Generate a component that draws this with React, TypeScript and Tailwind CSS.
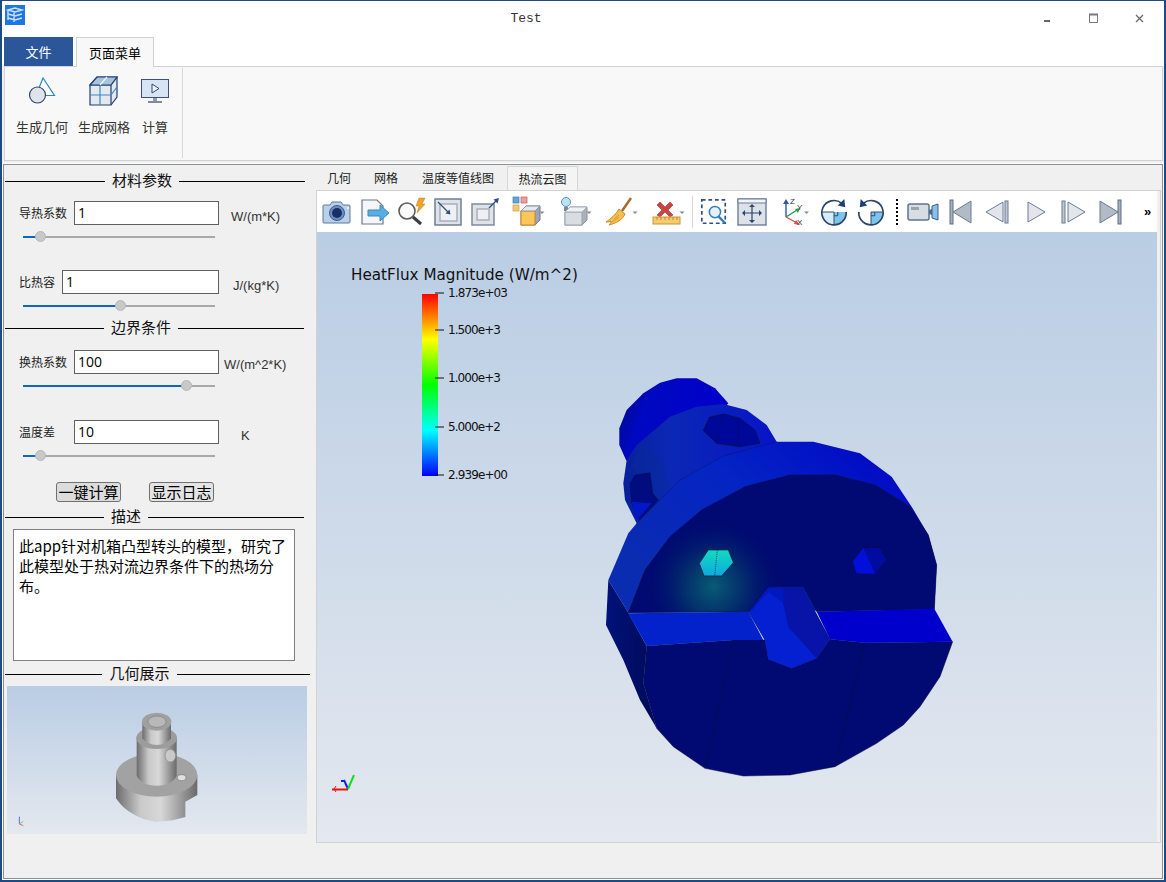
import type { ReactNode } from 'react';

const cjk = "font-['Noto_Sans_CJK_SC','Noto_Sans',sans-serif]";

function Ico({ children, className = 'w-[32px] h-[32px]' }: { children: ReactNode; className?: string }) {
    return (
        <svg viewBox="0 0 32 32" className={className} fill="none">
            {children}
        </svg>
    );
}

const Caret = () => <path d="M27.500 15.500h5l-2.500 2.500z" fill="#8a8a8a" />;

const toolbar = [
    {
        w: 'w-[37px]',
        icon: (
            <Ico>
                <path d="M3 9h6l2-3h9l2 3h6a1 1 0 0 1 1 1v16a1 1 0 0 1-1 1H3a1 1 0 0 1-1-1V10a1 1 0 0 1 1-1z" fill="#b9d0ea" stroke="#5f7899" />
                <circle cx="16" cy="17" r="7.500" fill="#6d8fc0" stroke="#3d5b8c" />
                <circle cx="16" cy="17" r="5" fill="#172f63" />
                <circle cx="27" cy="12" r="1" fill="#fff" />
            </Ico>
        ),
    },
    {
        w: 'w-[37px]',
        icon: (
            <Ico>
                <path d="M4 4h15l6 6v18H4z" fill="#f4f6f9" stroke="#6c7888" strokeWidth="1.200" />
                <path d="M10 14h12v-5l9 8-9 8v-5H10z" fill="#58aee2" stroke="#3d86bd" />
            </Ico>
        ),
    },
    {
        w: 'w-[37px]',
        icon: (
            <Ico>
                <circle cx="12" cy="15" r="8" fill="#fafafa" stroke="#5c5c5c" strokeWidth="1.600" />
                <path d="M18 21l8 7" stroke="#3d3d3d" strokeWidth="3" />
                <path d="M24 2h6l-3 6h3l-8 9 2-7h-3z" fill="#f0a22a" stroke="#c9791a" strokeWidth=".5" />
            </Ico>
        ),
    },
    {
        w: 'w-[37px]',
        icon: (
            <Ico>
                <rect x="3" y="3" width="26" height="26" fill="#dfe3e8" stroke="#6e7f99" strokeWidth="1.500" />
                <rect x="8" y="8" width="17" height="17" fill="#eef0f3" stroke="#a8b0bc" strokeWidth="1.500" />
                <path d="M6 6l11 11" stroke="#2c4f80" strokeWidth="1.200" />
                <path d="M18.500 18.500l-5-1 4-4z" fill="#2c4f80" />
            </Ico>
        ),
    },
    {
        w: 'w-[37px]',
        icon: (
            <Ico>
                <rect x="3" y="8" width="22" height="21" fill="#dfe3e8" stroke="#7d8a9e" strokeWidth="1.500" />
                <rect x="8" y="13" width="12" height="11" fill="#eef0f3" stroke="#a8b0bc" strokeWidth="1.500" />
                <path d="M20 12L28 4" stroke="#2c4f80" strokeWidth="1.200" />
                <path d="M30 2l-1.500 5.500-4-4z" fill="#2c4f80" />
            </Ico>
        ),
    },
    {
        w: 'w-[49px]',
        icon: (
            <Ico className="w-[36px] h-[32px] overflow-visible">
                <rect x="1" y="1" width="6" height="6" fill="#63a6d8" stroke="#3f7fb0" strokeWidth=".7" />
                <rect x="9" y="1" width="6" height="6" fill="#e9a0a0" stroke="#c25a5a" strokeWidth=".7" />
                <rect x="1" y="9" width="6" height="6" fill="#f5c878" stroke="#d59a38" strokeWidth=".7" />
                <path d="M9 15l5-5h14v14l-5 5H9z" fill="#9aa6b5" stroke="#6d7a8b" />
                <rect x="9" y="15" width="14" height="14" fill="#fcc65a" stroke="#c98a28" />
                <path d="M9 15l5-5h14l-5 5z" fill="#e5e8ec" stroke="#8e99a8" />
                <Caret />
            </Ico>
        ),
    },
    {
        w: 'w-[45px]',
        icon: (
            <Ico className="w-[36px] h-[32px] overflow-visible">
                <circle cx="7" cy="6" r="4.500" fill="#bfe2f7" stroke="#4f93c6" />
                <rect x="5" y="11" width="4" height="4" fill="#7c8792" />
                <path d="M6 16l5-5h17v13l-5 5H6z" fill="#aab1bb" stroke="#8a94a1" />
                <rect x="6" y="16" width="17" height="13" fill="#d9dde2" stroke="#9aa3ae" />
                <path d="M6 16l5-5h17l-5 5z" fill="#eff1f3" stroke="#a8b0ba" />
                <Caret />
            </Ico>
        ),
    },
    {
        w: 'w-[48px]',
        icon: (
            <Ico className="w-[36px] h-[32px] overflow-visible">
                <path d="M26 2l-9 13" stroke="#a9662a" strokeWidth="2.400" />
                <path d="M14 13l6 5c-2 5-8 9-16 11 2-2 2-3 2-4-1 1-3 1-5 1 5-3 10-8 13-13z" fill="#f6bd4f" stroke="#c98c2c" />
                <path d="M9 23l5-4M7 26l7-5" stroke="#c98c2c" strokeWidth=".7" />
                <Caret />
            </Ico>
        ),
    },
    {
        w: 'w-[45px]',
        icon: (
            <Ico className="w-[36px] h-[32px] overflow-visible">
                <path d="M8 6l5 5 5-5 3 3-5 5 5 5-3 2-5-5-5 5-3-2 5-5-5-5z" fill="#c9453f" stroke="#a5302b" strokeWidth=".6" />
                <rect x="1" y="21" width="27" height="7" fill="#f6ca6d" stroke="#c99638" />
                <path d="M5 21v3M9 21v3M13 21v3M17 21v3M21 21v3M25 21v3" stroke="#a97e2c" strokeWidth=".8" />
                <Caret />
            </Ico>
        ),
    },
    {
        w: 'w-[5px]',
        icon: <div className="w-px h-[32px] bg-[#d8d8d8]" />,
    },
    {
        w: 'w-[38px]',
        icon: (
            <Ico className="w-[30px] h-[30px]">
                <rect x="3" y="3" width="25" height="25" stroke="#33507c" strokeWidth="1.800" strokeDasharray="4 3" />
                <circle cx="17" cy="16" r="6" fill="#e6f2fb" stroke="#2f7fb8" strokeWidth="1.600" />
                <path d="M21 21l7 7" stroke="#2f7fb8" strokeWidth="2.600" />
            </Ico>
        ),
    },
    {
        w: 'w-[38px]',
        icon: (
            <Ico>
                <rect x="2" y="3" width="28" height="26" fill="#dde2e8" stroke="#6d7f9b" strokeWidth="1.400" />
                <rect x="2" y="3" width="28" height="4" fill="#f2f4f7" stroke="#6d7f9b" />
                <path d="M16 9v17M8 17h16" stroke="#26476f" strokeWidth="1.200" />
                <path d="M16 8l3 3h-6zM16 27l3-3h-6zM6 17l3-3v6zM26 17l-3-3v6z" fill="#26476f" />
            </Ico>
        ),
    },
    {
        w: 'w-[45px]',
        icon: (
            <Ico className="w-[36px] h-[32px] overflow-visible">
                <path d="M8 21V6" stroke="#2c56a5" strokeWidth="1.400" />
                <path d="M8 3l3 5H5z" fill="#2c56a5" />
                <path d="M8 21l11-7" stroke="#2a9a4a" strokeWidth="1.400" />
                <path d="M22 12l-2 5-3-4z" fill="#2a9a4a" />
                <path d="M8 21l11 6" stroke="#e04848" strokeWidth="1.400" />
                <path d="M22 29l-6-1 2-4z" fill="#e04848" />
                <text x="12" y="8" fontSize="8" fill="#333" fontFamily="Liberation Sans">Z</text>
                <text x="19" y="14" fontSize="8" fill="#333" fontFamily="Liberation Sans">Y</text>
                <text x="19" y="29" fontSize="8" fill="#333" fontFamily="Liberation Sans">X</text>
                <path d="M26 15.500h5l-2.500 2.500z" fill="#8a8a8a" />
            </Ico>
        ),
    },
    {
        w: 'w-[36px]',
        icon: (
            <Ico className="w-[30px] h-[30px]">
                <path d="M3 16a13 13 0 0 0 13 13V16z" fill="#d4ecfb" />
                <path d="M16 16v13a13 13 0 0 0 13-13z" fill="#7cc4ee" />
                <path d="M24 6.500A13 13 0 1 0 29 16" stroke="#2c4468" strokeWidth="1.800" />
                <path d="M3 16h13v13M16 20h4v-4" stroke="#2c4468" strokeWidth="1" />
                <path d="M27 2l1 9-8-2z" fill="#1c3f77" />
            </Ico>
        ),
    },
    {
        w: 'w-[37px]',
        icon: (
            <Ico className="w-[30px] h-[30px]">
                <path d="M29 16a13 13 0 0 1-13 13V16z" fill="#d4ecfb" />
                <path d="M16 16h13a13 13 0 0 1-13 13z" fill="#7cc4ee" />
                <path d="M8 6.500A13 13 0 1 1 3 16" stroke="#2c4468" strokeWidth="1.800" />
                <path d="M29 16H16v13M16 20h4v-4" stroke="#2c4468" strokeWidth="1" />
                <path d="M5 2l-1 9 8-2z" fill="#1c3f77" />
            </Ico>
        ),
    },
    {
        w: 'w-[15px]',
        icon: <div className="w-[2px] h-[26px] border-l-2 border-dotted border-black" />,
    },
    {
        w: 'w-[38px]',
        icon: (
            <Ico>
                <rect x="1" y="8" width="21" height="16" rx="2" fill="#d8dde3" stroke="#5f7391" strokeWidth="1.500" />
                <rect x="4" y="11" width="8" height="3" fill="#9aa3ae" />
                <path d="M22 14l3-1v6l-3-1z" fill="#4a6c9a" />
                <path d="M25 10l6-2v16l-6-2z" fill="#87c0e4" stroke="#3f5f8c" />
            </Ico>
        ),
    },
    {
        w: 'w-[38px]',
        icon: (
            <Ico>
                <rect x="5" y="4" width="3" height="24" fill="#a7b0bc" stroke="#5c6f8c" />
                <path d="M8 16L26 5v22z" fill="#b2bac5" stroke="#6a7b95" />
            </Ico>
        ),
    },
    {
        w: 'w-[36px]',
        icon: (
            <Ico>
                <path d="M4 16l17-10v20z" fill="#e2e6eb" stroke="#6a7b95" />
                <rect x="23" y="5" width="3" height="22" fill="#c1c8d1" stroke="#6a7b95" />
            </Ico>
        ),
    },
    {
        w: 'w-[39px]',
        icon: (
            <Ico>
                <path d="M8 6l17 10-17 10z" fill="#e2e6eb" stroke="#6a7b95" />
            </Ico>
        ),
    },
    {
        w: 'w-[36px]',
        icon: (
            <Ico>
                <rect x="5" y="5" width="3" height="22" fill="#c1c8d1" stroke="#6a7b95" />
                <path d="M11 6l17 10-17 10z" fill="#e2e6eb" stroke="#6a7b95" />
            </Ico>
        ),
    },
    {
        w: 'w-[37px]',
        icon: (
            <Ico>
                <path d="M6 5l18 11L6 27z" fill="#b2bac5" stroke="#6a7b95" />
                <rect x="24" y="4" width="3" height="24" fill="#a7b0bc" stroke="#5c6f8c" />
            </Ico>
        ),
    },
];

function SectionHeader({ left, mid, right, title, className }: { left: string; mid: string; right: string; title: string; className: string }) {
    return (
        <div className={`flex items-center h-[18px] ml-px ${className}`}>
            <div className={`h-px bg-black ${left}`} />
            <div className={`text-center text-[15px] leading-none text-[#111] mb-[3px] ${mid}`}>{title}</div>
            <div className={`h-px bg-black ${right}`} />
        </div>
    );
}

function ParamRow({ label, value, unit, labelW, inputW, unitCls, className }: { label: string; value: string; unit: string; labelW: string; inputW: string; unitCls: string; className: string }) {
    return (
        <div className={`flex items-center h-[24px] pl-[15px] ${className}`}>
            <div className={`text-[12px] leading-none text-[#222] whitespace-nowrap ${labelW}`}>{label}</div>
            <div className={`h-[24px] bg-white border border-[#606060] pl-[3px] text-[14px] leading-[22px] text-black font-['Open_Sans',sans-serif] ${inputW}`}>{value}</div>
            <div className={`text-[13px] leading-none text-[#333] whitespace-nowrap font-['Liberation_Sans',sans-serif] ${unitCls}`}>{unit}</div>
        </div>
    );
}

function Slider({ pos }: { pos: number }) {
    return (
        <div className="relative mt-[4px] ml-[19px] w-[192px] h-[16px] flex items-center">
            <div className="w-full h-[2px] bg-[#a9a9a9]">
                <div className="h-full bg-[#1068bc]" style={{ width: pos }} />
            </div>
            <div className="absolute top-[2px] w-[11px] h-[11px] rounded-full bg-[#c8c8c8] border border-[#b8b8b8]" style={{ left: pos - 5.5 }} />
        </div>
    );
}

function GeometryPreview() {
    return (
        <svg viewBox="21 558 900 444" className="w-[300px] h-[148px] block">
            <defs>
                <linearGradient id="geoBg" x1="0" y1="0" x2="0" y2="1">
                    <stop offset="0" stopColor="#b9cde4" />
                    <stop offset="1" stopColor="#e4e8ef" />
                </linearGradient>
                <linearGradient id="metal" x1="0" y1="0" x2="1" y2="0">
                    <stop offset="0" stopColor="#6c6c6c" />
                    <stop offset=".3" stopColor="#c9c9c9" />
                    <stop offset=".55" stopColor="#d8d8d8" />
                    <stop offset="1" stopColor="#6a6a6a" />
                </linearGradient>
            </defs>
            <rect x="21" y="558" width="900" height="444" fill="url(#geoBg)" />
            <path d="M348 825v70c20 30 50 50 85 63l35 8 50-5 38-10v-46l36-20v-60z" fill="url(#metal)" />
            <ellipse cx="470" cy="825" rx="122" ry="65" fill="#a2a2a2" />
            <path d="M410 712v115c8 18 30 30 60 30s52-12 60-30V712z" fill="url(#metal)" />
            <ellipse cx="470" cy="714" rx="61" ry="33" fill="#9c9c9c" />
            <path d="M427 665v50c8 12 26 20 43 20s35-8 43-20v-50z" fill="url(#metal)" />
            <ellipse cx="470" cy="665" rx="44" ry="27" fill="#a0a0a0" />
            <ellipse cx="471" cy="665" rx="27" ry="17" fill="#b8b8b8" stroke="#7e7e7e" strokeWidth="2" />
            <ellipse cx="511" cy="767" rx="16" ry="19" fill="#c9c9c9" stroke="#8a8a8a" strokeWidth="2" />
            <ellipse cx="545" cy="833" rx="13" ry="9" fill="#e0e0e0" stroke="#777" strokeWidth="2" />
            <path d="M58 950v22" stroke="#5a6fd0" strokeWidth="3" />
            <path d="M58 972l12-8" stroke="#79c987" strokeWidth="3" />
            <path d="M58 972l12 5" stroke="#e06a6a" strokeWidth="3" />
        </svg>
    );
}

function HeatFluxScene() {
    return (
        <svg viewBox="317 232 840 610" className="absolute inset-0 w-full h-full">
            <defs>
                <linearGradient id="colorBar" x1="0" y1="0" x2="0" y2="1">
                    <stop offset="0" stopColor="#ff0000" />
                    <stop offset=".25" stopColor="#ffff00" />
                    <stop offset=".5" stopColor="#00ff00" />
                    <stop offset=".75" stopColor="#00ffff" />
                    <stop offset="1" stopColor="#0000ff" />
                </linearGradient>
                <linearGradient id="backCyl" x1="0" y1="0" x2="1" y2=".3">
                    <stop offset="0" stopColor="#000a80" />
                    <stop offset=".3" stopColor="#0008c0" />
                    <stop offset="1" stopColor="#0000cc" />
                </linearGradient>
                <linearGradient id="midCyl" x1="0" y1="0" x2="1" y2="0">
                    <stop offset="0" stopColor="#08209a" />
                    <stop offset=".3" stopColor="#0a28b4" />
                    <stop offset="1" stopColor="#0814c8" />
                </linearGradient>
                <linearGradient id="rim" x1="0" y1=".6" x2="1" y2="0">
                    <stop offset="0" stopColor="#0a2cb0" />
                    <stop offset=".45" stopColor="#0424c4" />
                    <stop offset="1" stopColor="#0000c4" />
                </linearGradient>
                <linearGradient id="hot" x1="0" y1="0" x2="0" y2="1">
                    <stop offset="0" stopColor="#10dcc0" />
                    <stop offset="1" stopColor="#10a8dc" />
                </linearGradient>
                <linearGradient id="sideDark" x1="0" y1="0" x2="1" y2="0">
                    <stop offset="0" stopColor="#00127a" />
                    <stop offset="1" stopColor="#000a58" />
                </linearGradient>
                <radialGradient id="glow" gradientUnits="userSpaceOnUse" cx="370" cy="650" r="210">
                    <stop offset="0" stopColor="#085c74" />
                    <stop offset=".4" stopColor="#04386c" stopOpacity=".85" />
                    <stop offset="1" stopColor="#000a6e" stopOpacity="0" />
                </radialGradient>
            </defs>

            <text x="351" y="280" fontSize="15.200" fill="#111" fontFamily="DejaVu Sans, sans-serif">HeatFlux Magnitude (W/m^2)</text>
            <rect x="422" y="294" width="16" height="182" fill="url(#colorBar)" />
            {[
                { y: 293, x: 448, t: '1.873e+03' },
                { y: 330, x: 448, t: '1.500e+3' },
                { y: 378, x: 448, t: '1.000e+3' },
                { y: 427, x: 448, t: '5.000e+2' },
                { y: 475, x: 448, t: '2.939e+00' },
            ].map((tick) => (
                <g key={tick.t}>
                    <path d={`M435 ${tick.y}h9`} stroke="#111" strokeWidth="1" />
                    <text x={tick.x} y={tick.y + 4} fontSize="12" fill="#111" fontFamily="DejaVu Sans, sans-serif" textLength={tick.t.length > 8 ? 60 : 53}>{tick.t}</text>
                </g>
            ))}

            <g transform="translate(590 370) scale(.33333)">
                <path d="M88 175L110 120 160 70 210 38 260 25H320L375 55 415 100 300 240 130 290 108 270 88 225z" fill="url(#backCyl)" />
                <path d="M110 270L140 225 240 140 320 110 400 102 470 120 530 165 560 215 400 330 140 460 105 390 100 340z" fill="url(#midCyl)" />
                <path d="M150 215L215 270 240 350 195 395 125 290z" fill="#0a2a9c" opacity=".55" />
                <path d="M340 182L358 142 400 132 450 145 495 180 510 220 450 230 380 220z" fill="#00089a" stroke="#0a1030" strokeWidth="2" />
                <path d="M400 132L378 220M445 145V230" stroke="#0a1030" strokeWidth="1" fill="none" />
                <path d="M120 340L135 315 180 308 188 370 205 390 150 450 125 400z" fill="#000c80" stroke="#0a1030" strokeWidth="1.500" />
                <path d="M125 395L185 400 140 450z" fill="#0018c8" />

                <path d="M55 630L115 490 140 460 200 400 270 330 400 258 560 215H670L810 250 905 320 965 410 1015 495 1040 585 1033 718 115 728z" fill="url(#rim)" />
                <path d="M140 460L200 400 270 330 400 258 560 215" stroke="#0a1030" strokeWidth="1.500" strokeDasharray="5 3" fill="none" />

                <path d="M115 728L165 600 240 500 335 420 465 350 600 315H735L855 345 960 410 1015 495 1040 585 1033 718 680 725 640 650H535L475 725z" fill="#000a72" />
                <path d="M115 728L165 600 240 500 335 420 465 350 600 315H735L855 345 960 410 1015 495 1040 585 1033 718 680 725 640 650H535L475 725z" fill="url(#glow)" stroke="#0a1030" strokeWidth="1.500" />

                <path d="M55 630L115 728 170 828 160 940 200 1075 150 990 100 870 48 765z" fill="url(#sideDark)" />
                <path d="M170 828L430 810H525L535 868 605 895 680 865 720 808 825 818 1088 815 1050 920 990 1010 940 1065 860 1120 735 1190 600 1215 460 1218 345 1195 250 1130 200 1075 160 940z" fill="#000a72" stroke="#0a1030" strokeWidth="1.500" />
                <path d="M430 810L345 1195M825 818L735 1190" stroke="#0a1030" strokeWidth="1.500" fill="none" />
                <path d="M115 730L475 725 520 810H430L170 828z" fill="#0422cc" />
                <path d="M680 725L1033 716 1088 815 825 818 720 808z" fill="#0000cc" />

                <path d="M475 725L535 650H635L720 808 680 865 605 895 535 868 525 810z" fill="#0018c0" stroke="#0a1030" strokeWidth="1.500" />
                <path d="M535 665L580 700 595 770 680 865 605 895 535 868 525 810 478 728z" fill="#0420d0" />
                <path d="M580 650H635L720 808 680 865 595 770 580 700z" fill="#0814a8" />

                <path d="M328 580L355 540H415L430 578 395 618H342z" fill="url(#hot)" stroke="#0a1030" strokeWidth="2" />
                <path d="M382 540L374 618" stroke="#0a1030" strokeWidth="1.500" strokeDasharray="4 2" fill="none" />
                <path d="M788 575L820 533H870L890 570 855 612 800 610z" fill="#000ca0" stroke="#0a1030" strokeWidth="1.500" />
                <path d="M788 575L820 533 855 612 800 610z" fill="#0010d8" />
            </g>

            <path d="M332 789.500h16" stroke="#f01010" strokeWidth="2" />
            <path d="M336 786l-2 3 2 3" stroke="#f01010" strokeWidth="1" fill="none" />
            <path d="M348 789l-4-9" stroke="#1020f0" strokeWidth="2" />
            <path d="M341 781h4" stroke="#1020f0" strokeWidth="2" />
            <path d="M348 789l6-14" stroke="#10e020" strokeWidth="2" />
        </svg>
    );
}

export default function App() {
    return (
        <div className={`w-[1166px] h-[882px] flex flex-col bg-[#f0f0f0] border-2 border-t-[1px] border-[#1d4a82] overflow-hidden ${cjk}`}>
            {/* title bar */}
            <div className="h-[36px] bg-white flex items-center relative shrink-0">
                <svg viewBox="0 0 20 20" className="absolute left-[3px] top-[4px] w-[20px] h-[20px]">
                    <rect width="20" height="20" fill="#1c76e6" />
                    <path d="M3 5l7-2 7 2-7 2zM3 9l7 2 7-2M3 13l7 2 7-2M3 5v10M9 7v10" stroke="#cfe3fb" strokeWidth="1.400" fill="none" />
                </svg>
                <div className="w-[1048px] text-center text-[13px] text-[#333] font-['Liberation_Mono',monospace]">Test</div>
                <svg viewBox="0 0 110 14" className="absolute right-[10px] top-[11px] w-[110px] h-[14px]">
                    <path d="M0 9h6" stroke="#666" strokeWidth="2" />
                    <path d="M45.500 2.500h8v8h-8z" stroke="#777" fill="none" />
                    <path d="M45 2.500h9" stroke="#777" strokeWidth="2" />
                    <path d="M92 3l7 7M99 3l-7 7" stroke="#666" strokeWidth="1.200" />
                </svg>
            </div>

            {/* ribbon tabs */}
            <div className="h-[29px] flex items-end pl-[2px] bg-white shrink-0">
                <div className="w-[69px] h-[29px] bg-[#2b579a] text-white text-[13px] flex items-center justify-center">文件</div>
                <div className="ml-[3px] w-[78px] h-[30px] -mb-px bg-[#f8f8f8] border border-b-0 border-[#d2d2d2] text-black text-[13px] flex items-center justify-center relative">页面菜单</div>
            </div>

            {/* ribbon */}
            <div className="h-[95px] mx-px ml-[2px] bg-[#f8f8f8] border border-[#d2d2d2] flex shrink-0">
                <div className="w-[178px] h-[90px] mt-[1px] border-r border-[#d8d8d8] flex">
                    <div className="w-[62px] ml-[6px] flex flex-col items-center">
                        <svg viewBox="0 0 28 28" className="w-[28px] h-[28px] mt-[9px]">
                            <path d="M15 1L26.500 18.500H8z" fill="#fbfdff" stroke="#2a86c8" strokeWidth="1.200" />
                            <circle cx="9.500" cy="18" r="8" fill="#dfe3ec" stroke="#38466c" strokeWidth="1.200" />
                        </svg>
                        <div className="mt-[14px] text-[13px] leading-[16px] text-[#333] whitespace-nowrap">生成几何</div>
                    </div>
                    <div className="w-[62px] flex flex-col items-center">
                        <svg viewBox="0 0 30 30" className="w-[30px] h-[30px] mt-[8px]">
                            <path d="M1 9l7-8h20v20l-6 8H1z" fill="#e4e9ef" stroke="#1f3f6e" strokeWidth="1.200" />
                            <path d="M1 9h21v20M22 9l6-8" stroke="#1f3f6e" strokeWidth="1.200" fill="none" />
                            <path d="M11 9v20M1 19h21M11 9l7-8M22 19l6-8" stroke="#3d8ac0" strokeWidth="1.200" fill="none" />
                            <path d="M1 9l7-8h20l-6 8z" fill="#a8c4dc" stroke="#1f3f6e" strokeWidth="1.200" />
                            <path d="M11 9l7-8" stroke="#eef4f9" strokeWidth="1.200" />
                        </svg>
                        <div className="mt-[13px] text-[13px] leading-[16px] text-[#333] whitespace-nowrap">生成网格</div>
                    </div>
                    <div className="w-[40px] flex flex-col items-center">
                        <svg viewBox="0 0 28 24" className="w-[28px] h-[24px] mt-[11px]">
                            <rect x=".5" y=".5" width="27" height="18" fill="#d6e4f4" stroke="#3c4f78" />
                            <path d="M11 5l7 4.500-7 4.500z" fill="#eef4fb" stroke="#2c4870" />
                            <path d="M12 19h4v3h-4z" fill="#8f9db2" />
                            <path d="M7 23h14" stroke="#2c3f66" strokeWidth="1.200" />
                        </svg>
                        <div className="mt-[16px] text-[13px] leading-[16px] text-[#333] whitespace-nowrap">计算</div>
                    </div>
                </div>
            </div>

            {/* main area */}
            <div className="flex-1 mt-[3px] ml-px mr-px mb-[1px] border border-[#8a9099] outline outline-1 outline-white flex">
                {/* left column */}
                <div className="w-[312px] shrink-0 flex flex-col">
                    <SectionHeader title="材料参数" left="w-[100px]" mid="w-[74px]" right="w-[126px]" className="mt-[7px]" />
                    <ParamRow label="导热系数" value="1" unit="W/(m*K)" labelW="w-[55px]" inputW="w-[145px]" unitCls="ml-[12px] mt-[6px]" className="mt-[11px]" />
                    <Slider pos={17.5} />
                    <ParamRow label="比热容" value="1" unit="J/(kg*K)" labelW="w-[43px]" inputW="w-[157px]" unitCls="ml-[14px] mt-[6px]" className="mt-[25px]" />
                    <Slider pos={97.5} />
                    <SectionHeader title="边界条件" left="w-[99px]" mid="w-[74px]" right="w-[126px]" className="mt-[5px]" />
                    <ParamRow label="换热系数" value="100" unit="W/(m^2*K)" labelW="w-[55px]" inputW="w-[145px]" unitCls="ml-[5px] mt-[4px]" className="mt-[13px]" />
                    <Slider pos={163} />
                    <ParamRow label="温度差" value="10" unit="K" labelW="w-[55px]" inputW="w-[145px]" unitCls="ml-[22px] mt-[6px]" className="mt-[26px]" />
                    <Slider pos={17.5} />
                    <div className="mt-[18px] flex pl-[52px] gap-[28px]">
                        <div className="w-[65px] h-[20px] rounded-[3px] border border-[#707070] bg-[#dcdcdc] text-[15px] leading-[17px] text-center text-black">一键计算</div>
                        <div className="w-[65px] h-[20px] rounded-[3px] border border-[#707070] bg-[#e4e4e4] text-[15px] leading-[17px] text-center text-black">显示日志</div>
                    </div>
                    <SectionHeader title="描述" left="w-[99px]" mid="w-[44px]" right="w-[156px]" className="mt-[6px]" />
                    <div className="mt-[3px] ml-[9px] w-[282px] h-[132px] bg-white border border-[#808080] pl-[5px] pr-[6px] pt-[6px] text-[15px] leading-[20px] text-black font-['Noto_Sans_CJK_SC','Open_Sans',sans-serif]">
                        此app针对机箱凸型转头的模型，研究了此模型处于热对流边界条件下的热场分布。
                    </div>
                    <SectionHeader title="几何展示" left="w-[97px]" mid="w-[75px]" right="w-[133px]" className="mt-[4px]" />
                    <div className="mt-[3px] ml-[3px] w-[300px]">
                        <GeometryPreview />
                    </div>
                </div>

                {/* right column */}
                <div className="w-[845px] shrink-0 pt-px flex flex-col h-[678px] mr-px">
                    <div className="h-[24px] flex items-end text-[12px] text-[#222] shrink-0">
                        <div className="w-[47px] pl-[11px] h-[24px] leading-[23px]">几何</div>
                        <div className="w-[48px] pl-[11px] h-[24px] leading-[23px]">网格</div>
                        <div className="w-[96px] pl-[11px] h-[24px] leading-[23px] whitespace-nowrap">温度等值线图</div>
                        <div className="w-[71px] h-[24px] border border-b-0 border-[#d6d6d6] bg-[#f4f4f4] text-center leading-[23px]">热流云图</div>
                    </div>
                    <div className="flex-1 border border-[#d2d2d2] pr-[3px] flex flex-col">
                        <div className="h-[41px] bg-white flex items-center pl-[1px] shrink-0">
                            {toolbar.map((item, i) => (
                                <div key={i} className={`${item.w} h-full flex items-center justify-center shrink-0`}>
                                    {item.icon}
                                </div>
                            ))}
                            <div className="ml-[16px] text-[13px] font-bold leading-none text-black font-['Liberation_Sans',sans-serif]">»</div>
                        </div>
                        <div className="relative flex-1 bg-gradient-to-b from-[#b9cde4] to-[#e4e8ef] overflow-hidden">
                            <HeatFluxScene />
                        </div>
                    </div>
                </div>
            </div>
        </div>
    );
}
